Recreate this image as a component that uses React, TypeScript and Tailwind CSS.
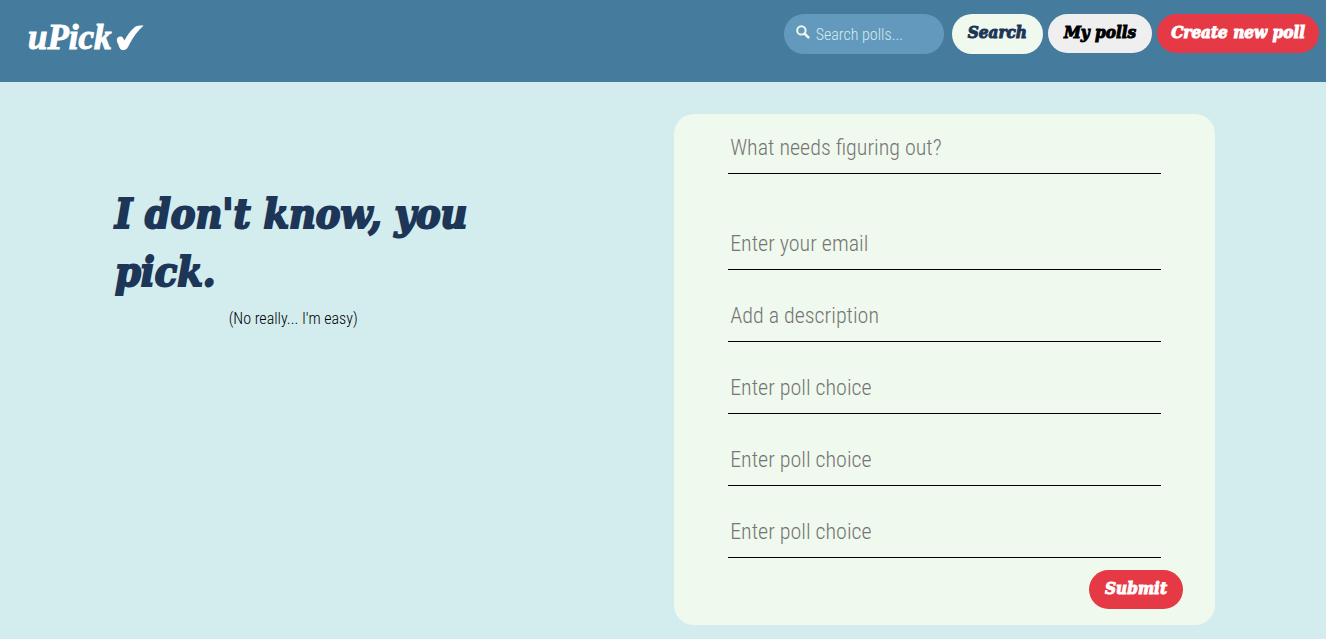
const display = 'font-["DejaVu_Serif_Condensed","DejaVu_Serif",serif] font-black italic';
const pill = 'rounded-full pb-0.5 text-[17px] [-webkit-text-stroke:1px_currentColor] whitespace-nowrap';
const body = 'font-["Roboto_Condensed",Roboto,sans-serif] font-light';

const choices = ['First poll choice', 'Second poll choice', 'Third poll choice'];

function Field({ label, placeholder, type = 'text' }: { label: string; placeholder: string; type?: string }) {
  return (
    <input
      type={type}
      aria-label={label}
      placeholder={placeholder}
      className="block h-[54px] w-full border-b border-black bg-transparent px-0.5 pt-0.5 text-[22px] text-black outline-none placeholder:text-[#757575]"
    />
  );
}

function Header() {
  return (
    <header className="flex min-h-[82px] items-start justify-between bg-[#457b9d] pr-[7px] pl-7">
      <a
        href="#home"
        className="mt-4 flex items-center gap-1 font-['Liberation_Serif',serif] text-[35px] leading-[44px] font-bold text-white italic [-webkit-text-stroke:1px_currentColor]"
      >
        uPick
        <svg viewBox="0 0 28 26" className="h-[26px] w-7" fill="currentColor" aria-hidden="true">
          <path d="M.8 14.6C.8 12.4 3 11 5.2 11.5C6.8 11.9 7.6 13.6 8.3 15.6C11 10.4 15 5 18.9 2C20.9.6 24.4.5 27.7.6C22 5.3 17.2 12 13.3 19.4C11.8 22.5 10.8 24.8 7.5 25.1C4.5 25.4 3.6 23.2 2.6 20.5C1.8 18.3.8 16.7.8 14.6Z" />
        </svg>
      </a>
      <nav className="mt-3.5 flex items-start gap-[5px]">
        <form className="flex gap-2" onSubmit={(event) => event.preventDefault()}>
          <label className="flex h-10 w-40 items-center gap-1.5 rounded-full bg-[#6399bc] px-3">
            <svg viewBox="0 0 14 14" className="mb-1 h-3.5 w-3.5 shrink-0" fill="none" stroke="#f1faee" aria-hidden="true">
              <circle cx="5.4" cy="5.4" r="4.2" strokeWidth="2" />
              <path d="M8.6 8.6L12.3 12.3" strokeWidth="2.6" strokeLinecap="round" />
            </svg>
            <input
              type="search"
              aria-label="Search polls"
              placeholder="Search polls..."
              className="w-full min-w-0 bg-transparent pt-0.5 text-base text-[#f1faee] outline-none placeholder:text-[#d3eced]"
            />
          </label>
          <button type="submit" className={`h-10 bg-[#f0f9ee] px-4 text-[#1d3557] ${pill} ${display}`}>
            Search
          </button>
        </form>
        <button type="button" className={`h-[39px] bg-[#efefef] px-4 text-black ${pill} ${display}`}>
          My polls
        </button>
        <button type="button" className={`h-[39px] bg-[#e63946] px-3.5 text-white ${pill} ${display}`}>
          Create new poll
        </button>
      </nav>
    </header>
  );
}

export default function App() {
  return (
    <div className={`min-h-screen bg-[#d3eced] ${body}`}>
      <Header />
      <main className="flex items-start justify-between px-[111px] pt-8 pb-3.5">
        <section className="w-[33%] pt-[71px]">
          <h1 className={`pl-1 text-[41px] leading-[58px] text-[#1d3557] [-webkit-text-stroke:2px_currentColor] ${display}`}>
            I don't know, you pick.
          </h1>
          <p className="mt-1 text-center text-base leading-7 text-black">(No really... I'm easy)</p>
        </section>
        <form
          className="w-[49%] rounded-[20px] bg-[#f0f9ee] pt-1.5 pb-4"
          onSubmit={(event) => event.preventDefault()}
        >
          <div className="px-[10%]">
            <Field label="Question" placeholder="What needs figuring out?" />
            <div className="mt-[42px] flex flex-col gap-[18px]">
              <Field label="Email" placeholder="Enter your email" type="email" />
              <Field label="Description" placeholder="Add a description" />
              {choices.map((choice) => (
                <Field key={choice} label={choice} placeholder="Enter poll choice" />
              ))}
            </div>
          </div>
          <div className="mt-3 flex justify-end pr-8">
            <button type="submit" className={`h-[39px] bg-[#e63946] px-4 text-white ${pill} ${display}`}>
              Submit
            </button>
          </div>
        </form>
      </main>
    </div>
  );
}
